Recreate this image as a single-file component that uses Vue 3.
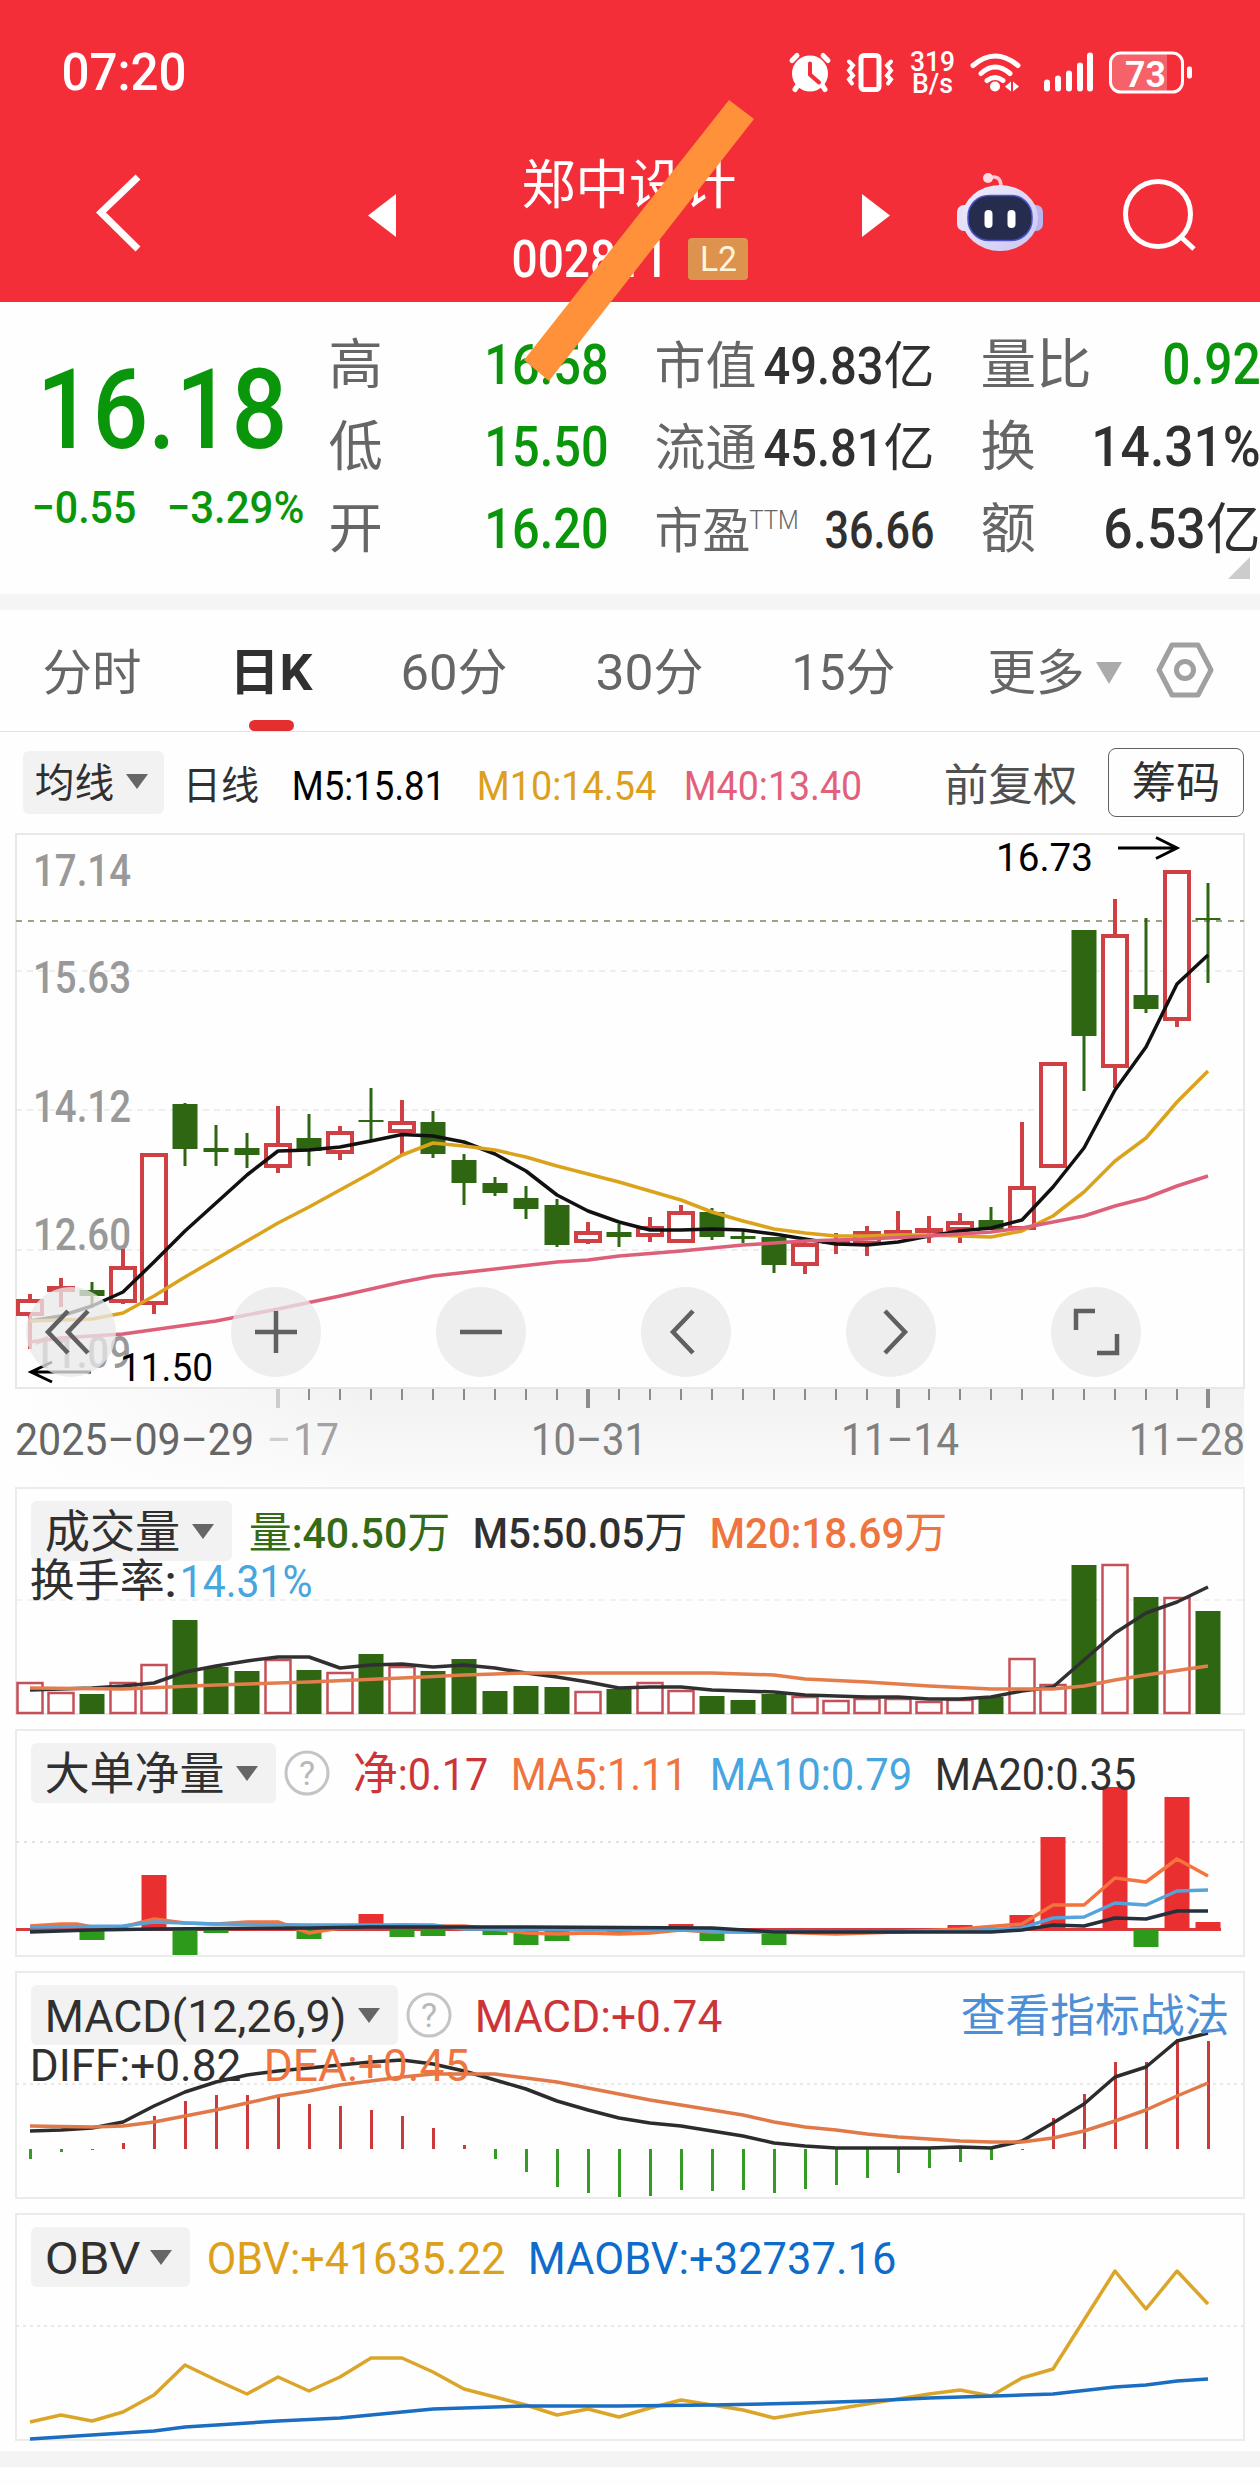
<script setup>
import { h } from 'vue'

// Text with a fixed width: latin runs are condensed, chinese runs keep their own width
const FitText = (props) => {
    const size = Number(props.size);
    const weight = props.weight || 500;
    const runs = props.text.split(/([\u4e00-\u9fff]+)/).filter(run => run !== '');
    const total = Number(props.w) + size * 0.06;
    const isHan = (run) => /[\u4e00-\u9fff]/.test(run);
    const hanChars = runs.filter(isHan).join('').length;
    const latinChars = runs.filter(run => !isHan(run)).join('').length;
    const hanWidth = latinChars ? size : total / hanChars;

    let x = -size * 0.03;
    const children = runs.map(run => {
        const width = isHan(run)
            ? run.length * hanWidth
            : (total - hanChars * hanWidth) * run.length / latinChars;
        const node = h('text', {
            x, y: size * 0.714, textLength: width, lengthAdjust: 'spacingAndGlyphs',
            'font-size': size, 'font-weight': isHan(run) && weight < 600 ? 400 : weight, fill: 'currentColor'
        }, run);
        x += width;
        return node;
    });

    return h('svg', { class: 'fit', width: props.w, height: size * 0.714 }, children);
}
FitText.props = ['text', 'w', 'size', 'weight'];

const xAt = (i) => 30 + i * 31;

// top, bottom, high, low, rising
const candles = [
    [1300, 1314, 1294, 1349, 1], [1287, 1290, 1278, 1307, 1], [1290, 1296, 1282, 1308, 0], [1267, 1301, 1249, 1304, 1],
    [1154, 1303, 1154, 1314, 1], [1104, 1149, 1103, 1166, 0], [1148, 1152, 1125, 1166, 0], [1148, 1155, 1133, 1168, 0],
    [1144, 1166, 1106, 1173, 1], [1138, 1151, 1114, 1166, 0], [1132, 1152, 1126, 1160, 1], [1120, 1122, 1088, 1141, 0],
    [1122, 1131, 1100, 1155, 1], [1122, 1154, 1111, 1158, 0], [1160, 1183, 1154, 1205, 0], [1183, 1193, 1177, 1196, 0],
    [1198, 1209, 1186, 1219, 0], [1205, 1245, 1199, 1247, 0], [1232, 1241, 1222, 1244, 1], [1232, 1237, 1224, 1247, 0],
    [1227, 1235, 1217, 1242, 1], [1212, 1241, 1205, 1243, 1], [1212, 1237, 1208, 1240, 0], [1236, 1239, 1230, 1243, 0],
    [1237, 1265, 1237, 1273, 0], [1244, 1264, 1242, 1274, 1], [1240, 1241, 1233, 1254, 1], [1232, 1243, 1226, 1256, 1],
    [1231, 1236, 1211, 1238, 1], [1229, 1231, 1216, 1243, 1], [1222, 1229, 1213, 1243, 1], [1220, 1230, 1207, 1230, 0],
    [1187, 1228, 1122, 1228, 1], [1063, 1166, 1063, 1166, 1], [930, 1036, 930, 1091, 0], [935, 1066, 899, 1088, 1],
    [995, 1009, 918, 1013, 0], [871, 1019, 871, 1027, 1], [918, 920, 883, 983, 0]
]

const ma5 = '30,1321 61,1316 92,1306 123,1292 154,1262 185,1231 216,1203 247,1175 278,1151 309,1150 340,1147 371,1141 402,1134.5 433,1136 464,1142 495,1154 526,1171 557,1195 588,1211 619,1222 650,1230 681,1230 712,1229 743,1230 774,1234 805,1239 836,1244 867,1245 898,1242 929,1236 960,1231 991,1228 1022,1220 1053,1187 1084,1148 1115,1090 1146,1047 1177,984 1208,955'
const ma10 = '30,1321 92,1319 123,1313 154,1296 185,1277 216,1259 247,1241 278,1223 309,1207 340,1190 371,1173 402,1155 433,1143 464,1146 495,1150 526,1157 557,1166 588,1174 619,1182 650,1191 681,1200 712,1212 743,1221 774,1229 805,1233 836,1236 867,1236 898,1235 929,1235 960,1236 991,1237 1022,1231 1053,1216 1084,1192 1115,1161 1146,1138 1177,1102 1208,1071'
const ma40 = '30,1342 61,1338 92,1336 123,1334 216,1321 278,1309 340,1296 402,1282 433,1276 495,1269 557,1262 588,1260 619,1256 681,1251 743,1245 805,1241 867,1239 929,1236 991,1232 1022,1228 1084,1216 1115,1206 1146,1198 1177,1186 1208,1176'

const priceLabels = [['17.14', 886], ['15.63', 993], ['14.12', 1122], ['12.60', 1250], ['11.09', 1368]]
const ticks = Array.from({ length: 31 }, (_, i) => 278 + i * 31)

// bar top, rising
const volumes = [
    [1683, 1], [1693, 1], [1694, 0], [1683, 1], [1665, 1], [1620, 0], [1667, 0], [1671, 0], [1660, 1], [1670, 0],
    [1673, 1], [1654, 0], [1667, 1], [1671, 0], [1659, 0], [1691, 0], [1686, 0], [1687, 0], [1692, 1], [1689, 0],
    [1683, 1], [1691, 1], [1696, 0], [1700, 0], [1694, 0], [1697, 1], [1701, 1], [1699, 1], [1699, 1], [1702, 1],
    [1700, 1], [1697, 0], [1659, 1], [1685, 1], [1565, 0], [1565, 1], [1597, 0], [1598, 1], [1611, 0]
]
const vol5 = '30,1690 92,1688 123,1686 154,1683 185,1672 216,1666 247,1661 278,1657 309,1657 340,1668 371,1665 402,1664 433,1667 464,1665 495,1668 526,1673 557,1677 588,1682 619,1688 650,1687 681,1687 712,1690 743,1691 774,1692 805,1695 867,1697 898,1697 929,1699 960,1699 991,1697 1022,1691 1053,1687 1084,1660 1115,1633 1146,1613 1177,1602 1208,1587'
const vol20 = '30,1688 123,1689 216,1685 309,1682 402,1678 464,1675 526,1673 619,1673 712,1673 774,1675 805,1679 867,1682 929,1686 991,1689 1053,1689 1084,1686 1115,1680 1146,1675 1208,1666'

// index, bar end
const netBars = [
    [2, 1940], [4, 1875], [5, 1955], [6, 1933], [9, 1939], [11, 1914], [12, 1937], [13, 1936], [15, 1935], [16, 1945],
    [17, 1941], [19, 1933], [21, 1924], [22, 1941], [24, 1945], [30, 1925], [32, 1915], [33, 1837], [35, 1787],
    [36, 1947], [37, 1797], [38, 1922]
]
const net5 = '30,1926 61,1924 77,1924 92,1927 123,1927 154,1919 185,1923 216,1924 247,1922 278,1922 309,1933 340,1928 402,1925 433,1926 464,1926 495,1929 526,1933 557,1934 588,1933 619,1934 650,1933 681,1930 712,1932 774,1932 836,1934 898,1932 960,1929 1022,1924 1053,1905 1084,1905 1115,1878 1146,1882 1177,1859 1208,1876'
const net10 = '30,1927 123,1926 154,1922 216,1924 309,1925 433,1925 464,1929 588,1930 681,1930 743,1932 867,1932 960,1931 1022,1928 1053,1918 1084,1917 1115,1903 1146,1905 1177,1891 1208,1890'
const net20 = '30,1932 92,1930 154,1929 309,1928 371,1927 526,1927 712,1928 774,1932 991,1932 1022,1930 1053,1925 1084,1926 1115,1918 1146,1919 1177,1911 1208,1911'

const macdBars = [
    2159, 2152, 2150, 2143, 2116, 2101, 2095, 2095, 2097, 2104, 2106, 2110, 2116, 2128, 2145, 2159, 2172, 2187, 2193, 2197,
    2196, 2190, 2191, 2190, 2193, 2189, 2185, 2178, 2173, 2168, 2162, 2160, 2150, 2118, 2094, 2062, 2062, 2039, 2041
]
const diff = '30,2131 61,2130 92,2128 123,2122 154,2106 185,2092 216,2082 247,2075 278,2071 309,2068 340,2065 371,2062 402,2060 433,2064 464,2071 495,2080 526,2089 557,2101 588,2110 619,2118 650,2123 681,2126 712,2131 743,2136 774,2143 805,2146 836,2148 929,2148 960,2147 991,2148 1022,2141 1053,2123 1084,2104 1115,2077 1146,2067 1177,2041 1208,2033'
const dea = '30,2126 92,2127 123,2126 154,2122 185,2116 216,2110 247,2103 278,2096 309,2091 340,2085 371,2081 402,2077 433,2074 464,2074 495,2074 526,2078 557,2082 588,2088 619,2094 650,2100 681,2105 712,2110 743,2115 774,2122 805,2127 836,2130 867,2134 898,2137 929,2139 960,2141 991,2142 1022,2142 1053,2138 1084,2131 1115,2121 1146,2110 1177,2096 1208,2083'

const obvValues = [
    2422, 2415, 2421, 2412, 2395, 2365, 2380, 2394, 2377, 2391, 2377, 2358, 2358, 2372, 2389, 2397, 2405, 2415, 2409, 2417,
    2408, 2400, 2405, 2410, 2418, 2413, 2409, 2404, 2399, 2394, 2390, 2396, 2378, 2369, 2320, 2271, 2309, 2271, 2304
]
const obv = obvValues.map((y, i) => xAt(i) + ',' + y).join(' ')
const maobv = '30,2439 92,2435 154,2431 185,2427 278,2421 340,2418 402,2412 433,2409 526,2406 619,2406 712,2405 805,2403 867,2401 929,2398 1022,2395 1053,2394 1115,2387 1146,2385 1177,2381 1208,2379'

const tools = [
    'M42 24 L22 45 L42 66 M62 24 L42 45 L62 66',
    'M24 45 H66 M45 24 V66',
    'M24 45 H66',
    'M52 24 L32 45 L52 66',
    'M39 24 L59 45 L39 66',
    'M44 24 H25 V43 M46 66 H66 V47'
]
</script>

<template>
    <div class="screen">
        <header class="header">
            <div class="status">
                <FitText text="07:20" w="122" size="51" />
                <svg width="420" height="60" viewBox="785 42.5 420 60">
                    <g fill="none" stroke="#fff" stroke-width="4" stroke-linecap="round">
                        <circle cx="810" cy="73" r="18" fill="#fff" stroke="none" />
                        <path d="M792 60 L797 55 M828 60 L823 55 M797 86 L795 89 M823 86 L825 89" stroke-width="5" />
                        <path d="M810 63 V74 L819 82" stroke="#f32e38" />
                        <rect x="861" y="55" width="18" height="34" rx="3" stroke-width="5" />
                        <path d="M849 61 l4 4 l-4 5 l4 5 l-4 4 l3 4 M891 61 l-4 4 l4 5 l-4 5 l4 4 l-3 4" />
                        <path d="M973 65 Q995 46 1018 65 M981 73 Q995 60 1010 73 M987 80 Q995 74 1003 80" stroke-width="5" />
                    </g>
                    <g fill="#fff">
                        <circle cx="995" cy="86" r="5" />
                        <path d="M1005 86 l6 -5 v10z M1019 86 l-6 -5 v10z" />
                        <rect x="1044" y="79" width="6" height="12" rx="3" />
                        <rect x="1055" y="75" width="6" height="16" rx="3" />
                        <rect x="1066" y="70" width="6" height="21" rx="3" />
                        <rect x="1077" y="62" width="6" height="29" rx="3" />
                        <rect x="1087" y="52" width="6" height="39" rx="3" />
                        <rect x="1187" y="66" width="5" height="12" rx="2" />
                        <path d="M1119 53 H1167 V91 H1119 Q1111 91 1111 83 V61 Q1111 53 1119 53z" opacity=".25" />
                        <text x="910" y="70" font-size="27" font-weight="500" textLength="45" lengthAdjust="spacingAndGlyphs">319</text>
                        <text x="912" y="92" font-size="27" font-weight="500" textLength="41" lengthAdjust="spacingAndGlyphs">B/s</text>
                        <text x="1125" y="86" font-size="37" font-weight="600" textLength="41" lengthAdjust="spacingAndGlyphs">73</text>
                    </g>
                    <rect x="1110.500" y="52.500" width="72" height="39" rx="10" fill="none" stroke="#fff" stroke-width="3" />
                </svg>
            </div>
            <div class="nav">
                <svg class="back" width="46" height="80" viewBox="95 173 46 80">
                    <path d="M138 177 L101 212.500 L138 249" fill="none" stroke="#fff" stroke-width="7" />
                </svg>
                <svg class="arrow prev" width="28" height="43" viewBox="0 0 28 43"><path d="M28 0 V43 L0 21.500z" fill="#fff" /></svg>
                <div class="title">
                    <FitText class="name" text="郑中设计" w="212" size="53" />
                    <div class="code">
                        <FitText text="002811" w="154" size="51" />
                        <span class="level"><FitText text="L2" w="35" size="35" weight="400" /></span>
                    </div>
                </div>
                <svg class="arrow next" width="28" height="43" viewBox="0 0 28 43"><path d="M0 0 V43 L28 21.500z" fill="#fff" /></svg>
                <svg class="robot" width="90" height="86" viewBox="955 170 90 86">
                    <defs>
                        <linearGradient id="shell" x1="0" y1="0" x2="1" y2="1">
                            <stop offset="0" stop-color="#f3eefb" />
                            <stop offset="1" stop-color="#c9c6f2" />
                        </linearGradient>
                    </defs>
                    <path d="M989 178 Q1001 174 1001 187" fill="none" stroke="#ffc4d2" stroke-width="3.500" />
                    <circle cx="988" cy="178" r="5" fill="#ffdbe3" />
                    <rect x="957" y="205" width="16" height="26" rx="7" fill="#e5e1f8" />
                    <rect x="1027" y="205" width="16" height="26" rx="7" fill="#b9b5ee" />
                    <ellipse cx="1000" cy="218" rx="38" ry="33" fill="url(#shell)" />
                    <rect x="968" y="195.500" width="64" height="45" rx="21" fill="#262c4d" stroke="#4a52c9" stroke-width="1.500" />
                    <rect x="984.500" y="210" width="8" height="18" rx="4" fill="#fff" />
                    <rect x="1007.500" y="210" width="8" height="18" rx="4" fill="#fff" />
                </svg>
                <svg class="search" width="80" height="76" viewBox="1120 176 80 76">
                    <g fill="none" stroke="#fff" stroke-width="5">
                        <circle cx="1158" cy="214" r="32.500" />
                        <path d="M1181 237 L1194 249" />
                    </g>
                </svg>
            </div>
        </header>

        <section class="quote">
            <div class="price green">
                <FitText text="16.18" w="244" size="112" />
                <div class="change">
                    <FitText text="−0.55" w="102" size="45" />
                    <FitText text="−3.29%" w="135" size="45" />
                </div>
            </div>
            <div class="stats">
                <div><FitText text="高" w="51" size="54" /><FitText class="green" text="16.58" w="121" size="56" /></div>
                <div><FitText text="低" w="51" size="54" /><FitText class="green" text="15.50" w="121" size="56" /></div>
                <div><FitText text="开" w="51" size="54" /><FitText class="green" text="16.20" w="121" size="56" /></div>
            </div>
            <div class="stats">
                <div><FitText text="市值" w="99" size="51" /><FitText class="dark" text="49.83亿" w="168" size="51" /></div>
                <div><FitText text="流通" w="99" size="51" /><FitText class="dark" text="45.81亿" w="168" size="51" /></div>
                <div>
                    <FitText text="市盈" w="93" size="49" />
                    <FitText class="ttm" text="TTM" w="48" size="25" weight="300" />
                    <FitText class="dark" text="36.66" w="107" size="51" />
                </div>
            </div>
            <div class="stats">
                <div><FitText text="量比" w="108" size="54" /><FitText class="green" text="0.92" w="95" size="57" /></div>
                <div><FitText text="换" w="52" size="54" /><FitText class="dark" text="14.31%" w="166" size="56" /></div>
                <div><FitText text="额" w="52" size="54" /><FitText class="dark" text="6.53亿" w="154" size="55" /></div>
            </div>
            <i class="corner"></i>
        </section>

        <nav class="tabs">
            <FitText text="分时" w="96" size="49" />
            <div class="active"><FitText text="日K" w="80" size="50" weight="700" /></div>
            <FitText text="60分" w="104" size="50" weight="400" />
            <FitText text="30分" w="105" size="50" weight="400" />
            <FitText text="15分" w="101" size="50" weight="400" />
            <div class="more"><FitText text="更多" w="94" size="49" /><i class="down"></i></div>
            <svg class="hex" width="58" height="56" viewBox="0 0 58 56">
                <g fill="none" stroke="#a0a0a0" stroke-width="5" stroke-linejoin="round">
                    <path d="M16 3 H42 L55 28 L42 53 H16 L3 28z" />
                    <circle cx="29" cy="28" r="8.500" />
                </g>
            </svg>
        </nav>

        <div class="averages">
            <div class="pill"><FitText text="均线" w="77" size="40" /><i class="caret"></i></div>
            <FitText class="dark period" text="日线" w="74" size="39" />
            <FitText class="black m5" text="M5:15.81" w="151" size="41" weight="400" />
            <FitText class="gold m10" text="M10:14.54" w="177" size="41" weight="400" />
            <FitText class="pink m40" text="M40:13.40" w="176" size="41" weight="400" />
            <FitText class="adjust" text="前复权" w="131" size="44" />
            <div class="chips"><FitText text="筹码" w="86" size="43" /></div>
        </div>

        <section class="kline">
            <svg width="1260" height="654" viewBox="0 833 1260 654">
                <defs>
                    <linearGradient id="axis" x1="0" y1="0" x2="0" y2="1">
                        <stop offset="0" stop-color="#f1f1f1" />
                        <stop offset="1" stop-color="#fbfbfb" />
                    </linearGradient>
                    <linearGradient id="fade" x1="0" y1="0" x2="1" y2="0">
                        <stop offset="0" stop-color="#fefefe" />
                        <stop offset="1" stop-color="#fefefe" stop-opacity="0" />
                    </linearGradient>
                </defs>
                <rect x="16" y="1388" width="1228" height="98" fill="url(#axis)" />
                <rect x="16" y="1388" width="360" height="98" fill="url(#fade)" />
                <rect x="16" y="834" width="1228" height="554" fill="#fefefe" stroke="#e8e8e8" stroke-width="2" />
                <path d="M16 971 H1244 M16 1110 H1244 M16 1250 H1244" stroke="#ddd" stroke-width="1" stroke-dasharray="6 5" />
                <path d="M16 921 H1244" stroke="#a0a080" stroke-width="2" stroke-dasharray="6 6" />
                <g font-size="45" font-weight="500" fill="#999">
                    <text v-for="l in priceLabels" :key="l[0]" x="33" :y="l[1]" textLength="98" lengthAdjust="spacingAndGlyphs">{{ l[0] }}</text>
                </g>
                <g v-for="(c, i) in candles" :key="i" :stroke="c[4] ? '#cf4044' : '#2e6612'" :stroke-width="c[4] ? 4 : 3">
                    <path :d="`M${xAt(i)} ${c[2]} V${c[0]} M${xAt(i)} ${c[1]} V${c[3]}`" />
                    <rect v-if="c[4]" :x="xAt(i) - 12" :y="c[0] + 1" width="24" :height="Math.max(c[1] - c[0] - 1, 1)" fill="#fefefe" />
                    <rect v-else :x="xAt(i) - 12.5" :y="c[0]" width="25" :height="c[1] - c[0]" fill="#2e6612" stroke="none" />
                </g>
                <g fill="none" stroke-width="3.500" stroke-linejoin="round">
                    <polyline :points="ma5" stroke="#111" />
                    <polyline :points="ma10" stroke="#dba31c" />
                    <polyline :points="ma40" stroke="#dd5f7a" />
                </g>
                <g fill="none" stroke="#000" stroke-width="3">
                    <path d="M1118 848 H1177 M1156 837.500 L1177 848 L1156 858.500" />
                    <path d="M91 1372 H31 M52 1362 L31 1372 L52 1382" />
                </g>
                <g font-size="38" fill="#000">
                    <text x="996" y="870.500" textLength="97" lengthAdjust="spacingAndGlyphs">16.73</text>
                    <text x="120" y="1381" textLength="93" lengthAdjust="spacingAndGlyphs">11.50</text>
                </g>
                <rect v-for="(x, i) in ticks" :key="x" :x="x - (i % 10 ? 1 : 2)" y="1389" :width="i % 10 ? 2 : 4"
                    :height="i % 10 ? 11 : 19" :fill="i ? '#8c8c8c' : '#ccc'" />
                <g font-size="44" font-weight="400" fill="#808080">
                    <text x="15" y="1455" fill="#666" textLength="239" lengthAdjust="spacingAndGlyphs">2025–09–29</text>
                    <text x="267" y="1455" fill="#d0d0d0" textLength="24" lengthAdjust="spacingAndGlyphs">–</text>
                    <text x="293" y="1455" fill="#a2a2a2" textLength="46" lengthAdjust="spacingAndGlyphs">17</text>
                    <text x="531" y="1455" textLength="116" lengthAdjust="spacingAndGlyphs">10–31</text>
                    <text x="841" y="1455" textLength="118" lengthAdjust="spacingAndGlyphs">11–14</text>
                    <text x="1129" y="1455" textLength="116" lengthAdjust="spacingAndGlyphs">11–28</text>
                </g>
            </svg>
            <div class="tools">
                <div v-for="d in tools" :key="d" class="tool">
                    <svg width="90" height="90" viewBox="0 0 90 90"><path :d="d" fill="none" stroke="#606060" stroke-width="4.500" /></svg>
                </div>
            </div>
        </section>

        <section class="panel">
            <svg class="chart" width="1260" height="229" viewBox="0 1487 1260 229">
                <path d="M16 1600 H1244" stroke="#e6e6e6" stroke-dasharray="6 5" />
                <template v-for="(v, i) in volumes" :key="i">
                    <rect v-if="v[1]" :x="xAt(i) - 12.5" :y="v[0]" width="25" :height="1713 - v[0]" fill="#fefefe" stroke="#c6505a" stroke-width="2.500" />
                    <rect v-else :x="xAt(i) - 12.5" :y="v[0]" width="25" :height="1714 - v[0]" fill="#2e6612" />
                </template>
                <polyline :points="vol5" stroke="#303030" />
                <polyline :points="vol20" stroke="#e37d4c" />
            </svg>
            <div class="legend">
                <div class="pill"><FitText text="成交量" w="133" size="45" /><i class="caret"></i></div>
                <FitText class="leaf near" text="量:40.50万" w="199" size="43" />
                <FitText class="dark" text="M5:50.05万" w="212" size="43" />
                <FitText class="orange" text="M20:18.69万" w="235" size="43" />
            </div>
            <div class="legend second">
                <FitText class="dark" text="换手率:" w="144" size="45" />
                <FitText class="sky rate" text="14.31%" w="130" size="45" weight="400" />
            </div>
        </section>

        <section class="panel">
            <svg class="chart" width="1260" height="229" viewBox="0 1729 1260 229">
                <path d="M16 1842 H1244" stroke="#e2e2e2" stroke-width="2" stroke-dasharray="3 5" />
                <path d="M16 1929.500 H1221" stroke="#d93a3e" stroke-width="3" />
                <rect v-for="b in netBars" :key="b[0]" :x="xAt(b[0]) - 12.5" :y="Math.min(b[1], 1930)" width="25"
                    :height="Math.abs(b[1] - 1930)" :fill="b[1] < 1930 ? '#e92f30' : '#2e9a1c'" />
                <polyline :points="net5" stroke="#f4733e" />
                <polyline :points="net10" stroke="#55a3d8" />
                <polyline :points="net20" stroke="#26303a" />
            </svg>
            <div class="legend">
                <div class="pill"><FitText text="大单净量" w="177" size="45" /><i class="caret"></i></div>
                <svg class="help" width="46" height="46" viewBox="0 0 46 46">
                    <circle cx="23" cy="23" r="21" fill="none" stroke="#c4c4c4" stroke-width="3" />
                    <text x="23" y="35" font-size="34" text-anchor="middle" fill="#b8b8b8">?</text>
                </svg>
                <FitText class="red" text="净:0.17" w="133" size="45" weight="400" />
                <FitText class="orange" text="MA5:1.11" w="174" size="45" weight="400" />
                <FitText class="sky" text="MA10:0.79" w="200" size="45" weight="400" />
                <FitText class="dark" text="MA20:0.35" w="199" size="45" weight="400" />
            </div>
        </section>

        <section class="panel">
            <svg class="chart" width="1260" height="229" viewBox="0 1971 1260 229">
                <path d="M16 2084 H1244" stroke="#e2e2e2" stroke-width="1.500" stroke-dasharray="3 4" />
                <path v-for="(y, i) in macdBars" :key="i" :d="`M${xAt(i) + 0.5} 2149 V${y}`" :stroke="y < 2149 ? '#cb3b3b' : '#359a26'" stroke-width="3" />
                <polyline :points="diff" stroke="#2c2c2c" />
                <polyline :points="dea" stroke="#e07847" />
            </svg>
            <div class="legend">
                <div class="pill"><FitText text="MACD(12,26,9)" w="299" size="45" weight="400" /><i class="caret"></i></div>
                <svg class="help" width="46" height="46" viewBox="0 0 46 46">
                    <circle cx="23" cy="23" r="21" fill="none" stroke="#c4c4c4" stroke-width="3" />
                    <text x="23" y="35" font-size="34" text-anchor="middle" fill="#b8b8b8">?</text>
                </svg>
                <FitText class="red" text="MACD:+0.74" w="245" size="45" weight="400" />
                <FitText class="link" text="查看指标战法" w="266" size="45" />
            </div>
            <div class="legend second">
                <FitText class="dark" text="DIFF:+0.82" w="209" size="45" weight="400" />
                <FitText class="orange" text="DEA:+0.45" w="203" size="45" weight="400" />
            </div>
        </section>

        <section class="panel">
            <svg class="chart" width="1260" height="229" viewBox="0 2213 1260 229">
                <path d="M16 2326 H1244" stroke="#e2e2e2" stroke-width="1.500" stroke-dasharray="3 4" />
                <polyline :points="obv" stroke="#dba52a" />
                <polyline :points="maobv" stroke="#1a6dc0" />
            </svg>
            <div class="legend">
                <div class="pill obv"><FitText text="OBV" w="93" size="45" weight="400" /><i class="caret"></i></div>
                <FitText class="gold near" text="OBV:+41635.22" w="296" size="45" weight="400" />
                <FitText class="blue" text="MAOBV:+32737.16" w="366" size="45" weight="400" />
            </div>
        </section>

        <div class="footer"></div>

        <svg class="stroke" width="232" height="284" viewBox="523 99 232 284">
            <path d="M729 100 L754 119 L549 381 L524 360z" fill="#ff913a" />
        </svg>
    </div>
</template>

<style>
body {
    margin: 0;
    background: #fefefe;
}

.fit {
    display: block;
    flex-shrink: 0;
    overflow: visible;
}
</style>

<style scoped>
.screen {
    position: relative;
    width: 1260px;
    height: 2485px;
    overflow: hidden;
    background: #fefefe;
    font-family: Roboto, "Noto Sans CJK SC", sans-serif;
}

svg {
    display: block;
    flex-shrink: 0;
}

.header {
    height: 302px;
    background: #f32e38;
    color: #fff;
}

.status {
    display: flex;
    align-items: center;
    justify-content: space-between;
    box-sizing: border-box;
    height: 145px;
    padding: 0 55px 0 63px;
}

.nav {
    display: flex;
    align-items: flex-start;
    padding-left: 95px;
}

.back {
    margin-top: 28px;
}

.arrow {
    margin-top: 49px;
}

.prev {
    margin-left: 227px;
}

.title {
    width: 235px;
    margin: 21px 0 0 117px;
}

.name {
    margin-left: 10px;
}

.code {
    display: flex;
    align-items: center;
    justify-content: space-between;
    margin-top: 34px;
}

.level {
    display: flex;
    align-items: center;
    justify-content: center;
    width: 60px;
    height: 42px;
    border-radius: 4px;
    background: #dd924e;
    color: #fff6d8;
}

.next {
    margin-left: 114px;
}

.robot {
    margin: 25px 0 0 65px;
}

.search {
    margin: 31px 0 0 75px;
}

.quote {
    position: relative;
    display: flex;
    height: 292px;
    border-bottom: 16px solid #f5f5f5;
    color: #666;
}

.price {
    flex-shrink: 0;
    width: 290px;
    padding: 66px 0 0 40px;
}

.change {
    display: flex;
    gap: 33px;
    margin: 43px 0 0 -7px;
}

.stats {
    display: flex;
    flex-direction: column;
    flex-shrink: 0;
    gap: 42px;
    width: 277px;
    margin-right: 49px;
    padding-top: 42px;
}

.stats > div {
    display: flex;
    align-items: flex-end;
    justify-content: space-between;
    height: 40px;
}

.ttm {
    align-self: flex-start;
    margin: 3px 28px 0 0;
}

.corner {
    position: absolute;
    right: 10px;
    bottom: 15px;
    border-left: 22px solid transparent;
    border-bottom: 22px solid #ccc;
}

.tabs {
    display: flex;
    align-items: flex-end;
    gap: 91px;
    height: 80px;
    padding: 0 0 41px 44px;
    border-bottom: 1px solid #e4e4e4;
    color: #666;
}

.active {
    position: relative;
    color: #303030;
}

.active::after {
    content: '';
    position: absolute;
    left: 18px;
    bottom: -41px;
    width: 45px;
    height: 11px;
    border-radius: 6px;
    background: #e42f31;
}

.more {
    display: flex;
    align-items: center;
    gap: 13px;
    margin-left: 4px;
}

.down {
    border: 13px solid transparent;
    border-top: 22px solid #ababab;
    border-bottom: 0;
}

.hex {
    margin: 0 0 -8px -57px;
}

.averages {
    display: flex;
    align-items: center;
    height: 101px;
    padding-left: 23px;
}

.pill {
    display: flex;
    align-items: center;
    gap: 13px;
    box-sizing: border-box;
    height: 60px;
    padding: 2px 18px 0 15px;
    border-radius: 6px;
    background: #f2f2f2;
    color: #303030;
}

.averages .pill {
    width: 141px;
    height: 63px;
    padding: 0 13px;
}

.pill.obv {
    gap: 11px;
}

.caret {
    margin-top: -2px;
    border: 11px solid transparent;
    border-top: 15px solid #666;
    border-bottom: 0;
}

.period {
    margin: 4px 0 0 20px;
}

.m5 {
    margin: 6px 0 0 35px;
}

.m10 {
    margin: 6px 0 0 34px;
}

.m40 {
    margin: 6px 0 0 30px;
}

.adjust {
    margin: 6px 0 0 84px;
    color: #505050;
}

.chips {
    display: flex;
    align-items: center;
    justify-content: center;
    box-sizing: border-box;
    width: 136px;
    height: 69px;
    margin-left: 32px;
    border: 1.5px solid #606060;
    border-radius: 8px;
    color: #303030;
}

.kline {
    position: relative;
    height: 654px;
}

.tools {
    position: absolute;
    left: 26px;
    top: 454px;
    display: flex;
    gap: 115px;
}

.tool {
    width: 90px;
    height: 90px;
    border-radius: 50%;
    background: rgba(233, 233, 233, 0.76);
}

.panel {
    position: relative;
    box-sizing: border-box;
    height: 228px;
    margin: 0 15px 14px;
    padding-top: 12px;
    border: 2px solid #ebebeb;
}

.chart {
    position: absolute;
    left: -17px;
    top: -2px;
}

.chart polyline {
    fill: none;
    stroke-width: 3.5px;
    stroke-linejoin: round;
}

.legend {
    position: relative;
    display: flex;
    align-items: center;
    gap: 25px;
    padding-left: 14px;
}

.legend > .fit {
    margin-top: 3px;
}

.legend > .near {
    margin-left: -7px;
}

.legend .help {
    margin: 0 -1px 0 -17px;
}

.legend.second {
    margin-top: 1px;
}

.legend > .rate {
    margin-left: -19px;
}

.legend > .link {
    margin-left: auto;
    margin-right: 15px;
    color: #4d8fd6;
}

.green {
    color: #0a960a;
}

.dark {
    color: #303030;
}

.black {
    color: #000;
}

.gold {
    color: #dda01c;
}

.pink {
    color: #e2607c;
}

.leaf {
    color: #336b16;
}

.orange {
    color: #ee7440;
}

.sky {
    color: #47a5e0;
}

.red {
    color: #cd3438;
}

.blue {
    color: #0d6bcb;
}

.footer {
    height: 16px;
    margin-top: -4px;
    background: #f4f4f4;
}

.stroke {
    position: absolute;
    left: 523px;
    top: 99px;
}
</style>
